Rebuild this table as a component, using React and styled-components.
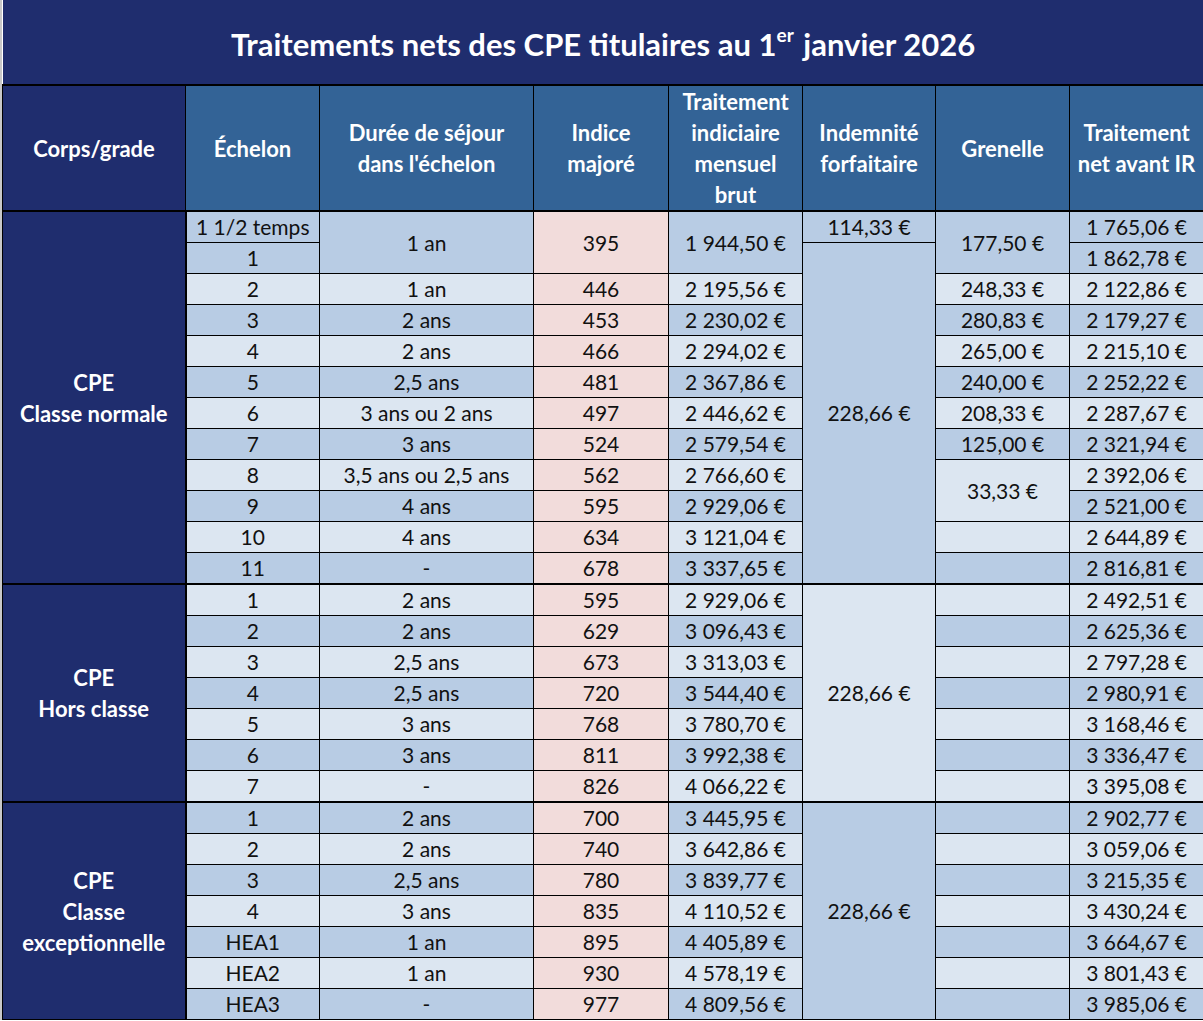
import React from 'react'
import styled, { createGlobalStyle } from 'styled-components'

const GlobalStyle = createGlobalStyle`
  html, body {
    margin: 0;
    padding: 0;
    background: #ffffff;
  }
`

const NAVY = '#1f2d6e'
const HEAD = '#336396'
const tones = {
    light: '#dce6f1',
    dark: '#b8cce4',
    pink: '#f2dcdb',
}

const Sheet = styled.div`
    width: 1201px;
    border-left: 2px solid #c8c8c8;
`

const Table = styled.table`
    width: 1201px;
    border-collapse: collapse;
    table-layout: fixed;
    font-family: Lato, "Noto Sans", sans-serif;
    color: #111;
`

// title bar
const TitleCell = styled.th`
    height: 80px;
    padding: 4px 0 0;
    background: ${NAVY};
    color: #fff;
    font-size: 31px;
    font-weight: 700;
    border-bottom: 2px solid #000;

    sup {
        font-size: 19px;
        line-height: 0;
        vertical-align: 14px;
        margin-right: 2px;
    }
`

// column headers
const HeadCell = styled.th`
    height: 122px;
    padding: 0 2px;
    background: ${props => props.$dark ? NAVY : HEAD};
    color: #fff;
    font-size: 22px;
    font-weight: 700;
    line-height: 31px;
    border: 1px solid #000;
    border-bottom: 2px solid #000;
    white-space: nowrap;
`

// body
const Row = styled.tr`
    td {
        border-top: ${props => props.$first ? '2px solid #000' : '1px solid #000'};
    }
`

const GradeCell = styled.td`
    padding: 0;
    background: ${NAVY};
    color: #fff;
    font-size: 22px;
    font-weight: 700;
    line-height: 31px;
    text-align: center;
    border: 1px solid #000;
    border-right-width: 2px;
`

const Cell = styled.td`
    height: 30px;
    padding: 0;
    background: ${props => tones[props.$tone]};
    font-size: 21px;
    line-height: 30px;
    text-align: center;
    border: 1px solid #000;
    white-space: nowrap;
`

const widths = [183, 134, 214, 135, 134, 133, 134, 134]

const headers = [
    ['Corps/grade'],
    ['Échelon'],
    ['Durée de séjour', "dans l'échelon"],
    ['Indice', 'majoré'],
    ['Traitement', 'indiciaire', 'mensuel', 'brut'],
    ['Indemnité', 'forfaitaire'],
    ['Grenelle'],
    ['Traitement', 'net avant IR'],
]

// cells: échelon, durée, indice, traitement brut, indemnité, grenelle, net
// a string is one cell, [value, rowSpan] a merged cell, null a cell covered by a merge
const sections = [
    {
        label: ['CPE', 'Classe normale'],
        rows: [
            ['dark', '1 1/2 temps', ['1 an', 2], ['395', 2], ['1 944,50 €', 2], '114,33 €', ['177,50 €', 2], '1 765,06 €'],
            ['dark', '1', null, null, null, ['228,66 €', 11], null, '1 862,78 €'],
            ['light', '2', '1 an', '446', '2 195,56 €', null, '248,33 €', '2 122,86 €'],
            ['dark', '3', '2 ans', '453', '2 230,02 €', null, '280,83 €', '2 179,27 €'],
            ['light', '4', '2 ans', '466', '2 294,02 €', null, '265,00 €', '2 215,10 €'],
            ['dark', '5', '2,5 ans', '481', '2 367,86 €', null, '240,00 €', '2 252,22 €'],
            ['light', '6', '3 ans ou 2 ans', '497', '2 446,62 €', null, '208,33 €', '2 287,67 €'],
            ['dark', '7', '3 ans', '524', '2 579,54 €', null, '125,00 €', '2 321,94 €'],
            ['light', '8', '3,5 ans ou 2,5 ans', '562', '2 766,60 €', null, ['33,33 €', 2], '2 392,06 €'],
            ['dark', '9', '4 ans', '595', '2 929,06 €', null, null, '2 521,00 €'],
            ['light', '10', '4 ans', '634', '3 121,04 €', null, '', '2 644,89 €'],
            ['dark', '11', '-', '678', '3 337,65 €', null, '', '2 816,81 €'],
        ],
    },
    {
        label: ['CPE', 'Hors classe'],
        rows: [
            ['light', '1', '2 ans', '595', '2 929,06 €', ['228,66 €', 7], '', '2 492,51 €'],
            ['dark', '2', '2 ans', '629', '3 096,43 €', null, '', '2 625,36 €'],
            ['light', '3', '2,5 ans', '673', '3 313,03 €', null, '', '2 797,28 €'],
            ['dark', '4', '2,5 ans', '720', '3 544,40 €', null, '', '2 980,91 €'],
            ['light', '5', '3 ans', '768', '3 780,70 €', null, '', '3 168,46 €'],
            ['dark', '6', '3 ans', '811', '3 992,38 €', null, '', '3 336,47 €'],
            ['light', '7', '-', '826', '4 066,22 €', null, '', '3 395,08 €'],
        ],
    },
    {
        label: ['CPE', 'Classe', 'exceptionnelle'],
        rows: [
            ['dark', '1', '2 ans', '700', '3 445,95 €', ['228,66 €', 7], '', '2 902,77 €'],
            ['light', '2', '2 ans', '740', '3 642,86 €', null, '', '3 059,06 €'],
            ['dark', '3', '2,5 ans', '780', '3 839,77 €', null, '', '3 215,35 €'],
            ['light', '4', '3 ans', '835', '4 110,52 €', null, '', '3 430,24 €'],
            ['dark', 'HEA1', '1 an', '895', '4 405,89 €', null, '', '3 664,67 €'],
            ['light', 'HEA2', '1 an', '930', '4 578,19 €', null, '', '3 801,43 €'],
            ['dark', 'HEA3', '-', '977', '4 809,56 €', null, '', '3 985,06 €'],
        ],
    },
]

const Lines = ({ lines }) => lines.map((line, i) => (
    <React.Fragment key={i}>
        {i > 0 && <br />}
        {line}
    </React.Fragment>
))

const App = () => {
    return (
        <Sheet>
            <GlobalStyle />
            <Table>
                <colgroup>
                    {widths.map((w, i) => <col key={i} style={{ width: w }} />)}
                </colgroup>
                <thead>
                    <tr>
                        <TitleCell colSpan={8}>
                            Traitements nets des CPE titulaires au 1<sup>er</sup> janvier 2026
                        </TitleCell>
                    </tr>
                    <tr>
                        {headers.map((h, i) => (
                            <HeadCell key={i} $dark={i === 0}>
                                <Lines lines={h} />
                            </HeadCell>
                        ))}
                    </tr>
                </thead>
                <tbody>
                    {sections.map((section, s) => section.rows.map(([tone, ...cells], r) => (
                        <Row key={`${s}-${r}`} $first={r === 0 && s > 0}>
                            {r === 0 && (
                                <GradeCell rowSpan={section.rows.length}>
                                    <Lines lines={section.label} />
                                </GradeCell>
                            )}
                            {cells.map((cell, c) => {
                                if (cell === null) return null
                                const [value, span] = Array.isArray(cell) ? cell : [cell, 1]
                                return (
                                    <Cell key={c} rowSpan={span} $tone={c === 2 ? 'pink' : tone}>
                                        {value}
                                    </Cell>
                                )
                            })}
                        </Row>
                    )))}
                </tbody>
            </Table>
        </Sheet>
    )
}

export default App
